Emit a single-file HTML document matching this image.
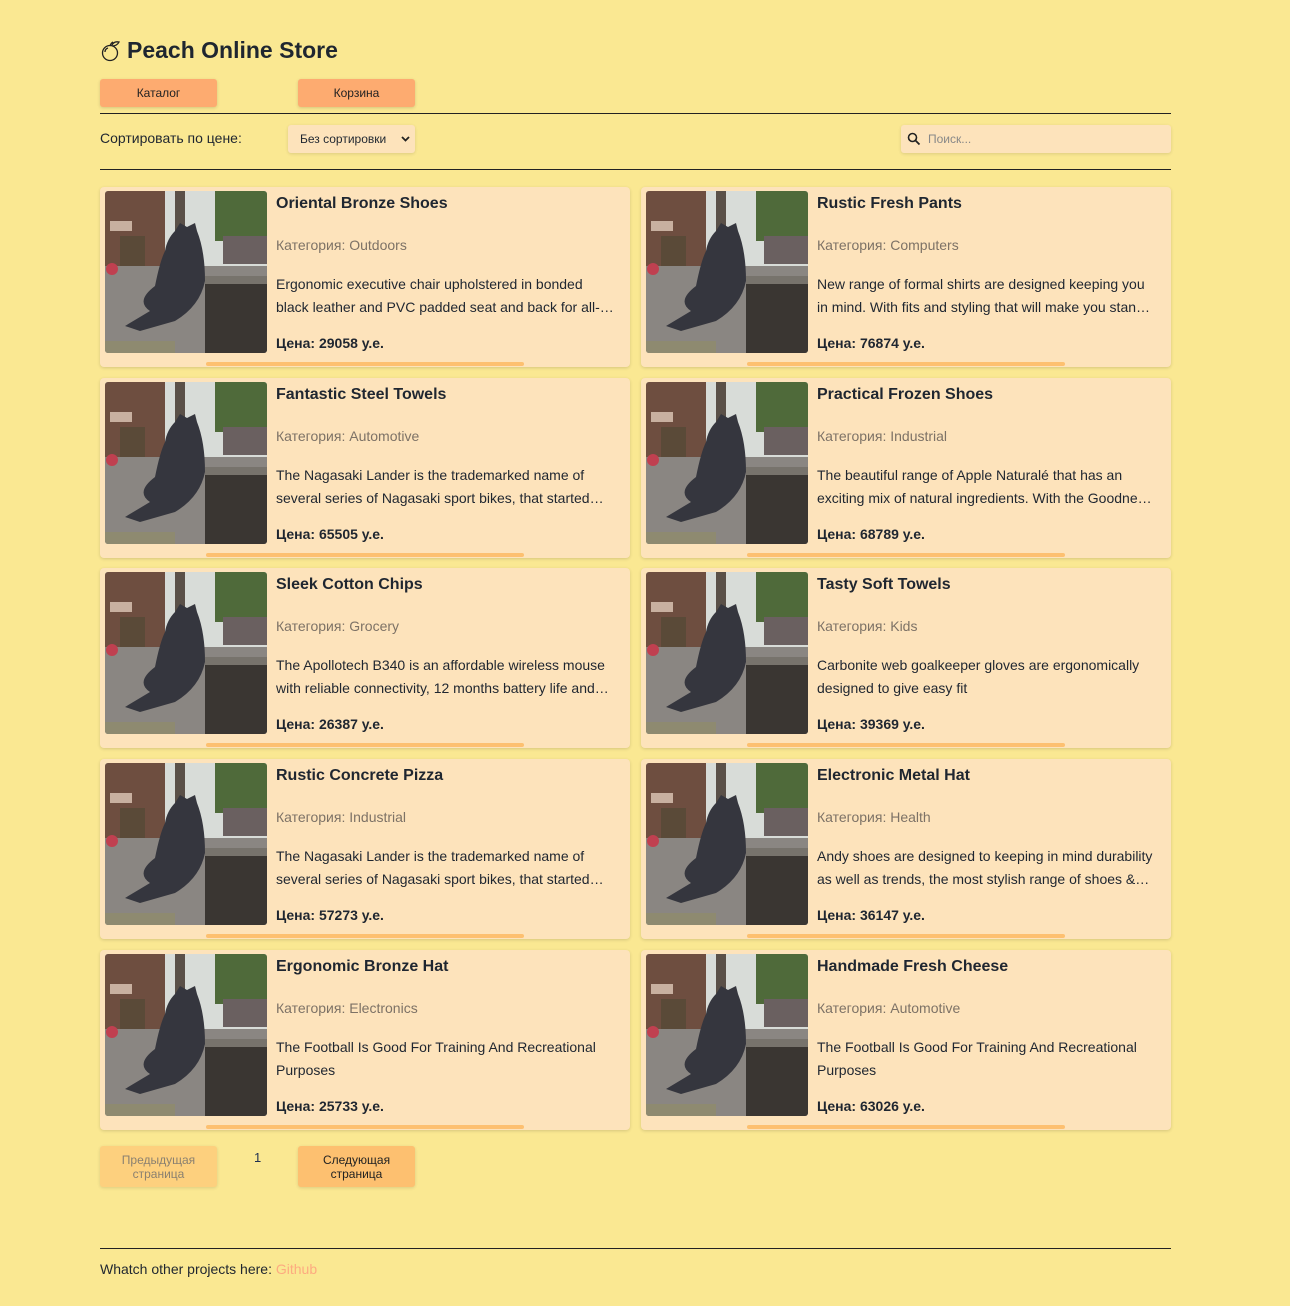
<!DOCTYPE html>
<html><head><meta charset="utf-8">
<style>
*{box-sizing:border-box;margin:0;padding:0}
body{width:1290px;height:1306px;background:#fae892;font-family:"Liberation Sans",Arial,sans-serif;color:#1f2630;position:relative;overflow:hidden}
.abs{position:absolute}
h1{position:absolute;left:100px;top:37px;font-size:23px;font-weight:bold;color:#1f2630;display:flex;align-items:center;gap:5px}
.btn{position:absolute;width:117px;height:28px;background:#fdab70;border-radius:3px;font-size:12px;display:flex;align-items:center;justify-content:center;box-shadow:0 1px 3px rgba(0,0,0,.15);color:#222}
.hr{position:absolute;left:100px;width:1071px;height:1px;background:#222}
.sel{position:absolute;left:288px;top:125px;width:127px;height:28px;background:#fde3bb;border-radius:3px;font-size:12px;padding-left:12px;display:flex;align-items:center;box-shadow:0 1px 3px rgba(0,0,0,.12)}
.search{position:absolute;left:901px;top:125px;width:270px;height:28px;background:#fde3bb;border-radius:3px;box-shadow:0 1px 3px rgba(0,0,0,.12);font-size:12px;color:#888;display:flex;align-items:center;padding-left:27px}
.card{position:absolute;width:530px;height:180px;background:#fde3bb;border-radius:4px;box-shadow:0 1px 3px rgba(0,0,0,.15)}
.card svg.img{position:absolute;left:5px;top:4px;width:162px;height:162px;border-radius:3px}
.t{position:absolute;left:176px;top:8px;font-size:16px;font-weight:bold;color:#1f2630}
.c{position:absolute;left:176px;top:50px;font-size:14px;color:#7d7266}
.d{position:absolute;left:176px;top:86px;width:340px;font-size:14px;line-height:23px;height:46px;overflow:hidden;display:-webkit-box;-webkit-line-clamp:2;-webkit-box-orient:vertical;color:#1f2630}
.p{position:absolute;left:176px;top:148px;font-size:14px;font-weight:bold}
.bar{position:absolute;left:106px;top:175px;width:318px;height:4px;background:#fdc070;border-radius:2px}
.pg{position:absolute;top:1146px;width:117px;height:41px;border-radius:3px;font-size:12px;text-align:center;line-height:14px;display:flex;align-items:center;justify-content:center;box-shadow:0 1px 3px rgba(0,0,0,.12)}
</style></head><body>
<svg width="0" height="0" style="position:absolute">
<defs>
<symbol id="cat" viewBox="0 0 162 162">
<rect width="162" height="162" fill="#b8b4ac"/>
<rect x="0" y="0" width="162" height="75" fill="#d8dcd8"/>
<rect x="0" y="0" width="60" height="78" fill="#6e4e40"/>
<rect x="5" y="30" width="22" height="10" fill="#c8b0a0"/>
<rect x="15" y="45" width="25" height="30" fill="#5a4a38"/>
<rect x="110" y="0" width="52" height="50" fill="#4f6a3a"/>
<rect x="70" y="0" width="10" height="65" fill="#5a5048"/>
<rect x="118" y="45" width="44" height="28" fill="#6a6060"/>
<rect x="0" y="75" width="162" height="87" fill="#8a8682"/>
<rect x="100" y="85" width="62" height="77" fill="#3a3632"/>
<rect x="100" y="85" width="62" height="8" fill="#77736c"/>
<path d="M70 40 L75 32 L82 36 L90 32 L92 40 Q100 60 100 90 Q95 115 70 130 L35 140 L20 135 L45 120 Q30 110 50 95 Q55 70 60 60 Q62 48 70 40Z" fill="#35363e"/>
<rect x="0" y="150" width="70" height="12" fill="#8e8a70"/>
<circle cx="7" cy="78" r="6" fill="#c04050"/>
</symbol>
</defs></svg>

<h1><svg width="22" height="22" viewBox="0 0 22 22" fill="none" stroke="#222" stroke-width="1.3"><circle cx="10" cy="13" r="7.5"/><path d="M10 6 Q11 3 13 2 M12 5 Q14 1 19 2 Q17 6 12 6"/><path d="M5 12 Q5 9 8 8"/></svg>Peach Online Store</h1>
<div class="btn" style="left:100px;top:79px">Каталог</div>
<div class="btn" style="left:298px;top:79px">Корзина</div>
<div class="hr" style="top:113px"></div>
<div class="abs" style="left:100px;top:130px;font-size:14px">Сортировать по цене:</div>
<div class="sel">Без сортировки<svg style="position:absolute;right:5px;top:11px" width="9" height="6" viewBox="0 0 9 6"><path d="M1 1 L4.5 4.5 L8 1" stroke="#222" stroke-width="1.8" fill="none"/></svg></div>
<div class="search"><svg style="position:absolute;left:6px;top:7px" width="14" height="14" viewBox="0 0 14 14"><circle cx="5.5" cy="5.5" r="4" stroke="#222" stroke-width="1.6" fill="none"/><path d="M8.5 8.5 L12.5 12.5" stroke="#222" stroke-width="1.8"/></svg>Поиск...</div>
<div class="hr" style="top:169px"></div>

<div class="card" style="left:100px;top:187px"><svg class="img"><use href="#cat"/></svg><div class="t">Oriental Bronze Shoes</div><div class="c">Категория: Outdoors</div><div class="d">Ergonomic executive chair upholstered in bonded black leather and PVC padded seat and back for all-day comfort and support</div><div class="p">Цена: 29058 у.е.</div><div class="bar"></div></div>
<div class="card" style="left:641px;top:187px"><svg class="img"><use href="#cat"/></svg><div class="t">Rustic Fresh Pants</div><div class="c">Категория: Computers</div><div class="d">New range of formal shirts are designed keeping you in mind. With fits and styling that will make you stand apart</div><div class="p">Цена: 76874 у.е.</div><div class="bar"></div></div>

<div class="card" style="left:100px;top:378px"><svg class="img"><use href="#cat"/></svg><div class="t">Fantastic Steel Towels</div><div class="c">Категория: Automotive</div><div class="d">The Nagasaki Lander is the trademarked name of several series of Nagasaki sport bikes, that started with the 1984 ABC800J</div><div class="p">Цена: 65505 у.е.</div><div class="bar"></div></div>
<div class="card" style="left:641px;top:378px"><svg class="img"><use href="#cat"/></svg><div class="t">Practical Frozen Shoes</div><div class="c">Категория: Industrial</div><div class="d">The beautiful range of Apple Naturalé that has an exciting mix of natural ingredients. With the Goodness of 100% Natural Ingredients</div><div class="p">Цена: 68789 у.е.</div><div class="bar"></div></div>

<div class="card" style="left:100px;top:568px"><svg class="img"><use href="#cat"/></svg><div class="t">Sleek Cotton Chips</div><div class="c">Категория: Grocery</div><div class="d">The Apollotech B340 is an affordable wireless mouse with reliable connectivity, 12 months battery life and modern design</div><div class="p">Цена: 26387 у.е.</div><div class="bar"></div></div>
<div class="card" style="left:641px;top:568px"><svg class="img"><use href="#cat"/></svg><div class="t">Tasty Soft Towels</div><div class="c">Категория: Kids</div><div class="d">Carbonite web goalkeeper gloves are ergonomically designed to give easy fit</div><div class="p">Цена: 39369 у.е.</div><div class="bar"></div></div>

<div class="card" style="left:100px;top:759px"><svg class="img"><use href="#cat"/></svg><div class="t">Rustic Concrete Pizza</div><div class="c">Категория: Industrial</div><div class="d">The Nagasaki Lander is the trademarked name of several series of Nagasaki sport bikes, that started with the 1984 ABC800J</div><div class="p">Цена: 57273 у.е.</div><div class="bar"></div></div>
<div class="card" style="left:641px;top:759px"><svg class="img"><use href="#cat"/></svg><div class="t">Electronic Metal Hat</div><div class="c">Категория: Health</div><div class="d">Andy shoes are designed to keeping in mind durability as well as trends, the most stylish range of shoes &amp; sandals</div><div class="p">Цена: 36147 у.е.</div><div class="bar"></div></div>

<div class="card" style="left:100px;top:950px"><svg class="img"><use href="#cat"/></svg><div class="t">Ergonomic Bronze Hat</div><div class="c">Категория: Electronics</div><div class="d">The Football Is Good For Training And Recreational Purposes</div><div class="p">Цена: 25733 у.е.</div><div class="bar"></div></div>
<div class="card" style="left:641px;top:950px"><svg class="img"><use href="#cat"/></svg><div class="t">Handmade Fresh Cheese</div><div class="c">Категория: Automotive</div><div class="d">The Football Is Good For Training And Recreational Purposes</div><div class="p">Цена: 63026 у.е.</div><div class="bar"></div></div>

<div class="pg" style="left:100px;background:#fdd07e;color:#8a8070">Предыдущая<br>страница</div>
<div class="abs" style="left:254px;top:1150px;font-size:13px;color:#1f3050">1</div>
<div class="pg" style="left:298px;background:#fdc070;color:#222">Следующая<br>страница</div>

<div class="hr" style="top:1248px"></div>
<div class="abs" style="left:100px;top:1261px;font-size:14px">Whatch other projects here: <span style="color:#fdab80">Github</span></div>
</body></html>
